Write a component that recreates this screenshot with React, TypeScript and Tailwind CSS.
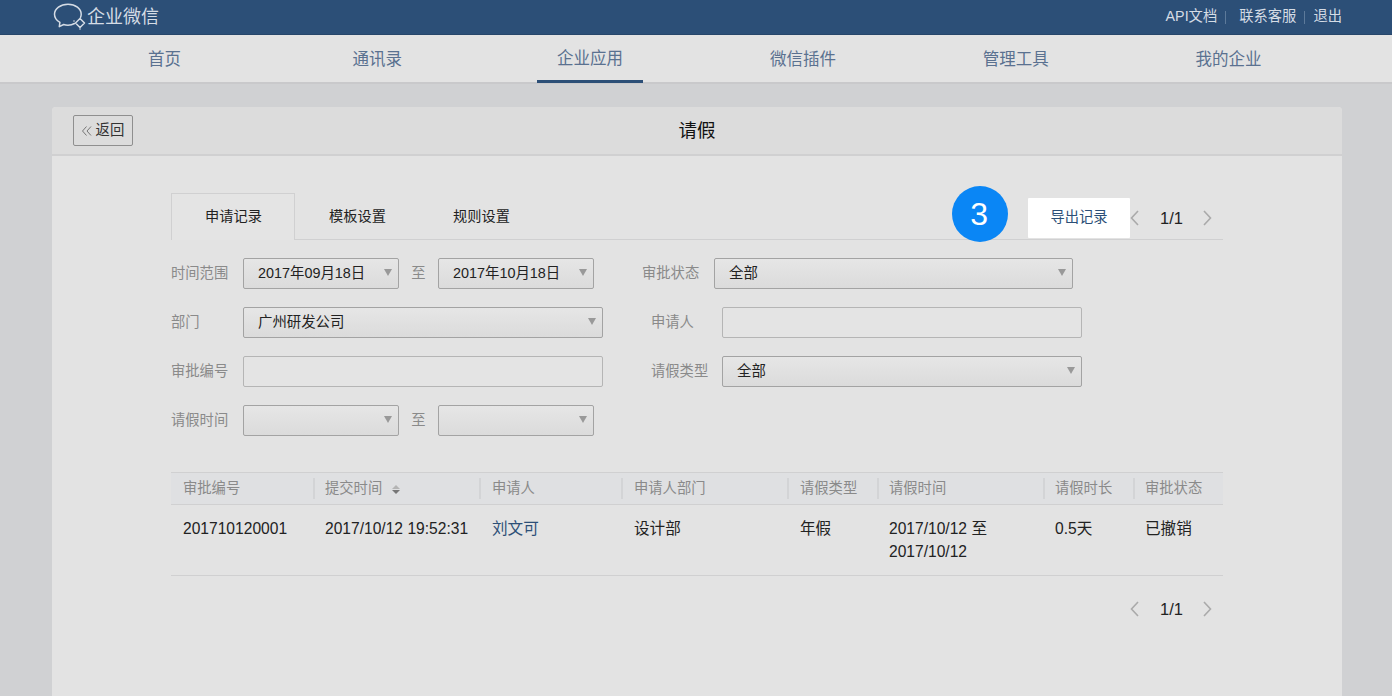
const navItems = ['首页', '通讯录', '企业应用', '微信插件', '管理工具', '我的企业'];
const tabs = ['申请记录', '模板设置', '规则设置'];

const columns = [
  { title: '审批编号', width: 'w-[144px]', pad: 'pl-[12px]' },
  { title: '提交时间', width: 'w-[166px]', pad: 'pl-[10px]', sort: true },
  { title: '申请人', width: 'w-[142px]', pad: 'pl-[11px]' },
  { title: '申请人部门', width: 'w-[166px]', pad: 'pl-[11px]' },
  { title: '请假类型', width: 'w-[90px]', pad: 'pl-[11px]' },
  { title: '请假时间', width: 'w-[166px]', pad: 'pl-[10px]' },
  { title: '请假时长', width: 'w-[90px]', pad: 'pl-[10px]' },
  { title: '审批状态', width: 'flex-1', pad: 'pl-[10px]' },
];

function Logo() {
  return (
    <svg width="33" height="28" viewBox="0 0 33 28" fill="none" stroke="#d5dce5" strokeWidth="1.5" className="mr-[1px]">
      <path d="M21.5 20.5C19.5 21.7 17.4 22.2 15 22.2C13.5 22.2 12 22 10.7 21.5L6.3 23.6L6.9 19.4C3.6 17.4 1.5 14.5 1.5 11.2C1.5 5.6 7.5 1.2 15 1.2C22.5 1.2 28.2 5.6 28.2 11.2C28.2 12.4 28 13.4 27.5 14.4" strokeLinecap="round" strokeLinejoin="round" />
      <path d="M27 15.5L31.5 20L27 24.5L22.5 20Z" strokeLinejoin="round" />
      <circle cx="27" cy="26" r="0.8" fill="#d5dce5" stroke="none" />
      <circle cx="21" cy="18" r="0.8" fill="#d5dce5" stroke="none" />
    </svg>
  );
}

function Select({ value, width }: { value?: string; width: string }) {
  return (
    <div className={`${width} h-[31px] flex items-center justify-between pl-[14px] pr-[6px] rounded-[2px] border border-[#a3a3a3] bg-gradient-to-b from-[#e6e6e6] to-[#dbdbdb] text-[14.4px] text-[#222]`}>
      <span className="pt-[1px]">{value}</span>
      <span className="w-0 h-0 mb-[2px] border-x-[4px] border-x-transparent border-t-[7px] border-t-[#999999]" />
    </div>
  );
}

function Label({ text, width = 'w-[72px]' }: { text: string; width?: string }) {
  return <div className={`${width} shrink-0 pt-[1px] text-[14.3px] text-[#8a8a8a]`}>{text}</div>;
}

function Pager() {
  return (
    <div className="flex items-center text-[16.5px] text-[#222]">
      <svg width="9" height="16" viewBox="0 0 9 16" fill="none" stroke="#aaaaaa" strokeWidth="1.6">
        <path d="M8 1L1.5 8L8 15" />
      </svg>
      <span className="ml-[21px] mr-[20px]">1/1</span>
      <svg width="9" height="16" viewBox="0 0 9 16" fill="none" stroke="#aaaaaa" strokeWidth="1.6">
        <path d="M1 1L7.5 8L1 15" />
      </svg>
    </div>
  );
}

export default function App() {
  return (
    <div className="h-[696px] overflow-hidden bg-[#d0d1d3] font-['Liberation_Sans','Noto_Sans_CJK_SC',sans-serif]">
      <div className="h-[35px] bg-[#2c4f77] border-b border-[#27466a] flex items-center justify-between pl-[53px] pr-[50px]">
        <div className="flex items-center text-[#d5dce5] text-[18px]">
          <Logo />
          <span>企业微信</span>
        </div>
        <div className="flex items-center text-[14.3px] text-[#d5dce5]">
          <span>API文档</span>
          <span className="w-px h-[13px] bg-[#5d7a9a] ml-[8px] mr-[13px]" />
          <span>联系客服</span>
          <span className="w-px h-[13px] bg-[#5d7a9a] mx-[8px]" />
          <span>退出</span>
        </div>
      </div>

      <div className="h-[49px] bg-[#e3e3e3] border-b-2 border-[#c9c9cb] pl-[58px] pr-[57px] grid grid-cols-6">
        {navItems.map((item, i) => (
          <div key={item} className="flex justify-center">
            <div className={`w-[106px] h-[48px] pt-[1px] flex items-center justify-center text-[16.5px] text-[#5a7190] ${i === 2 ? 'border-b-[3px] border-[#2c4f77] text-[#2c4f77]' : ''}`}>
              {item}
            </div>
          </div>
        ))}
      </div>

      <div className="mx-[52px] mt-[23px] w-[1290px] h-[600px] rounded-t-[4px] bg-[#e3e3e3]">
        <div className="relative h-[49px] bg-[#dcdcdc] border-b-2 border-[#d0d0d1] rounded-t-[4px] flex items-center justify-center text-[18.5px] text-[#111]">
          <div className="absolute left-[21px] top-[8px] w-[60px] h-[31px] rounded-[2px] border border-[#8f8f8f] flex items-center justify-center text-[14.4px] text-[#333]">
            <svg width="10" height="10" viewBox="0 0 10 10" fill="none" stroke="#777777" strokeWidth="1" className="mr-[4px]">
              <path d="M4.5 0.5L0.5 5L4.5 9.5M9 0.5L5 5L9 9.5" />
            </svg>
            返回
          </div>
          请假
        </div>

        <div className="px-[119px] pt-[37px]">
          <div className="h-[47px] border-b border-[#d0d0d1] flex justify-between">
            <div className="flex text-[14.2px] text-[#222]">
              {tabs.map((tab, i) => (
                <div
                  key={tab}
                  className={`w-[124px] h-[47px] pl-[1px] flex items-center justify-center ${i === 0 ? 'border border-b-0 border-[#d0d0d1] bg-[#e4e4e4]' : ''}`}
                >
                  {tab}
                </div>
              ))}
            </div>
            <div className="flex items-center self-start mt-[5px] pr-[11px]">
              <div className="relative w-[102px] h-[40px] bg-white rounded-[1px] flex items-center justify-center text-[14.3px] text-[#2c4f77]">
                <div className="absolute left-[-76px] top-[-12px] w-[56px] h-[56px] pr-[2px] rounded-full bg-[#0a86f5] flex items-center justify-center text-[32px] text-white">
                  3
                </div>
                导出记录
              </div>
              <Pager />
            </div>
          </div>

          <div className="mt-[18px] flex flex-col gap-[18px]">
            <div className="flex items-center">
              <Label text="时间范围" />
              <Select value="2017年09月18日" width="w-[156px]" />
              <div className="w-[39px] pt-[1px] text-center text-[14.3px] text-[#8a8a8a]">至</div>
              <Select value="2017年10月18日" width="w-[156px]" />
              <div className="w-[48px]" />
              <Label text="审批状态" />
              <Select value="全部" width="w-[359px]" />
            </div>
            <div className="flex items-center">
              <Label text="部门" />
              <Select value="广州研发公司" width="w-[360px]" />
              <div className="w-[48px]" />
              <Label text="申请人" width="w-[71px]" />
              <div className="w-[360px] h-[31px] rounded-[2px] border border-[#b5b5b5] bg-[#e4e4e4]" />
            </div>
            <div className="flex items-center">
              <Label text="审批编号" />
              <div className="w-[360px] h-[31px] rounded-[2px] border border-[#b5b5b5] bg-[#e4e4e4]" />
              <div className="w-[48px]" />
              <Label text="请假类型" width="w-[71px]" />
              <Select value="全部" width="w-[360px]" />
            </div>
            <div className="flex items-center">
              <Label text="请假时间" />
              <Select width="w-[156px]" />
              <div className="w-[39px] pt-[1px] text-center text-[14.3px] text-[#8a8a8a]">至</div>
              <Select width="w-[156px]" />
            </div>
          </div>

          <div className="mt-[36px] h-[33px] flex items-center border-y border-[#d0d0d1] bg-[#dfe0e2] text-[14.3px] text-[#8a8a8a]">
            {columns.map((col, i) => (
              <div key={col.title} className={`${col.width} ${col.pad} h-[21px] pt-[1px] flex items-center ${i < columns.length - 1 ? 'border-r-2 border-[#d3d4d6]' : ''}`}>
                {col.title}
                {col.sort && (
                  <span className="ml-[10px] flex flex-col gap-[1px]">
                    <span className="w-0 h-0 border-x-[4px] border-x-transparent border-b-[4px] border-b-[#b4b4b4]" />
                    <span className="w-0 h-0 border-x-[4px] border-x-transparent border-t-[4px] border-t-[#777]" />
                  </span>
                )}
              </div>
            ))}
          </div>
          <div className="h-[71px] flex border-b border-[#d0d0d1] pt-[12px] text-[15.6px] leading-[23px] text-[#222]">
            <div className="w-[144px] pl-[12px]">201710120001</div>
            <div className="w-[166px] pl-[10px]">2017/10/12 19:52:31</div>
            <div className="w-[142px] pl-[11px] text-[#2c4f77]">刘文可</div>
            <div className="w-[166px] pl-[11px]">设计部</div>
            <div className="w-[90px] pl-[11px]">年假</div>
            <div className="w-[166px] pl-[10px]">2017/10/12 至<br />2017/10/12</div>
            <div className="w-[90px] pl-[10px]">0.5天</div>
            <div className="flex-1 pl-[10px]">已撤销</div>
          </div>

          <div className="mt-[21px] flex justify-end pr-[11px]">
            <Pager />
          </div>
        </div>
      </div>
    </div>
  );
}
